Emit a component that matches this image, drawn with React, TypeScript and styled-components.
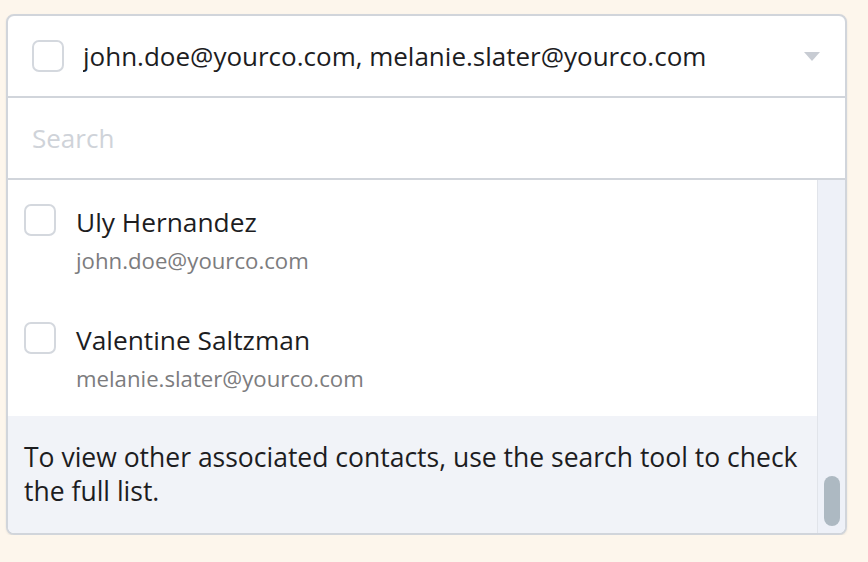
import React from "react";
import styled, { createGlobalStyle } from "styled-components";

const GlobalStyle = createGlobalStyle`
  html, body {
    margin: 0;
    padding: 0;
    background: #fdf6ec;
  }
  body {
    font-family: "Open Sans", "Liberation Sans", Arial, sans-serif;
    -webkit-font-smoothing: antialiased;
  }
`;

const Page = styled.div`
  padding: 14px 0 0 6px;
`;

const Card = styled.div`
  width: 841px;
  height: 521px;
  box-sizing: border-box;
  border: 2px solid #d1d5db;
  border-radius: 8px;
  background: #ffffff;
  overflow: hidden;
  display: flex;
  flex-direction: column;
  box-shadow: 0 1px 2px rgba(60, 70, 80, 0.12);
`;

const Header = styled.div`
  height: 80px;
  flex: none;
  display: flex;
  align-items: center;
  padding: 0 25px 0 24px;
  gap: 19px;
  border-bottom: 2px solid #d1d5db;
`;

const Checkbox = styled.span`
  width: 32px;
  height: 32px;
  flex: none;
  box-sizing: border-box;
  border: 2px solid #d4d8de;
  border-radius: 7px;
  background: #fff;
`;

const SelectedText = styled.span`
  font-size: 26px;
  line-height: 36px;
  color: #1d1d1f;
  white-space: nowrap;
  overflow: hidden;
  flex: 1;
`;

const Caret = styled.svg`
  flex: none;
  width: 16px;
  height: 9px;
`;

const SearchRow = styled.div`
  height: 80px;
  flex: none;
  display: flex;
  align-items: center;
  padding: 0 24px;
  border-bottom: 2px solid #d1d5db;
`;

const SearchInput = styled.input`
  flex: 1;
  border: none;
  outline: none;
  padding: 0;
  background: transparent;
  font-family: "Open Sans", "Liberation Sans", Arial, sans-serif;
  font-size: 26px;
  line-height: 36px;
  color: #1d1d1f;
  &::placeholder {
    color: #cfd3d9;
  }
`;

const Body = styled.div`
  flex: 1;
  min-height: 0;
  display: flex;
`;

const Content = styled.div`
  flex: 1;
  display: flex;
  flex-direction: column;
`;

const List = styled.div`
  flex: 1;
  display: flex;
  flex-direction: column;
  gap: 43px;
  padding: 24px 16px 0;
`;

const Item = styled.div`
  display: flex;
  align-items: flex-start;
  gap: 20px;
`;

const ItemText = styled.div`
  display: flex;
  flex-direction: column;
  gap: 3px;
`;

const Name = styled.div`
  font-size: 26.3px;
  line-height: 36px;
  color: #1d1d1f;
`;

const Email = styled.div`
  font-size: 22.2px;
  line-height: 36px;
  color: #7c7c7e;
`;

const Footer = styled.div`
  flex: none;
  height: 117px;
  box-sizing: border-box;
  background: #f1f3f8;
  padding: 24px 12px 0 16px;
  font-size: 26.5px;
  line-height: 34px;
  color: #1d1d1f;
  white-space: nowrap;
`;

const Track = styled.div`
  width: 28px;
  flex: none;
  box-sizing: border-box;
  background: #eef1f8;
  border-left: 1px solid #e1e4ea;
  display: flex;
  flex-direction: column;
  justify-content: flex-end;
  align-items: center;
  padding-bottom: 7px;
`;

const Thumb = styled.div`
  width: 16px;
  height: 50px;
  border-radius: 8px;
  background: #adb9c2;
`;

const contacts = [
  { name: "Uly Hernandez", email: "john.doe@yourco.com" },
  { name: "Valentine Saltzman", email: "melanie.slater@yourco.com" },
];

export default function App() {
  return (
    <>
      <GlobalStyle />
      <Page>
        <Card>
          <Header>
            <Checkbox />
            <SelectedText>john.doe@yourco.com, melanie.slater@yourco.com</SelectedText>
            <Caret viewBox="0 0 16 9">
              <polygon points="0,0 16,0 8,9" fill="#c8ccd3" />
            </Caret>
          </Header>
          <SearchRow>
            <SearchInput placeholder="Search" />
          </SearchRow>
          <Body>
            <Content>
              <List>
                {contacts.map((c) => (
                  <Item key={c.email}>
                    <Checkbox />
                    <ItemText>
                      <Name>{c.name}</Name>
                      <Email>{c.email}</Email>
                    </ItemText>
                  </Item>
                ))}
              </List>
              <Footer>
                To view other associated contacts, use the search tool to check
                <br />
                the full list.
              </Footer>
            </Content>
            <Track>
              <Thumb />
            </Track>
          </Body>
        </Card>
      </Page>
    </>
  );
}
